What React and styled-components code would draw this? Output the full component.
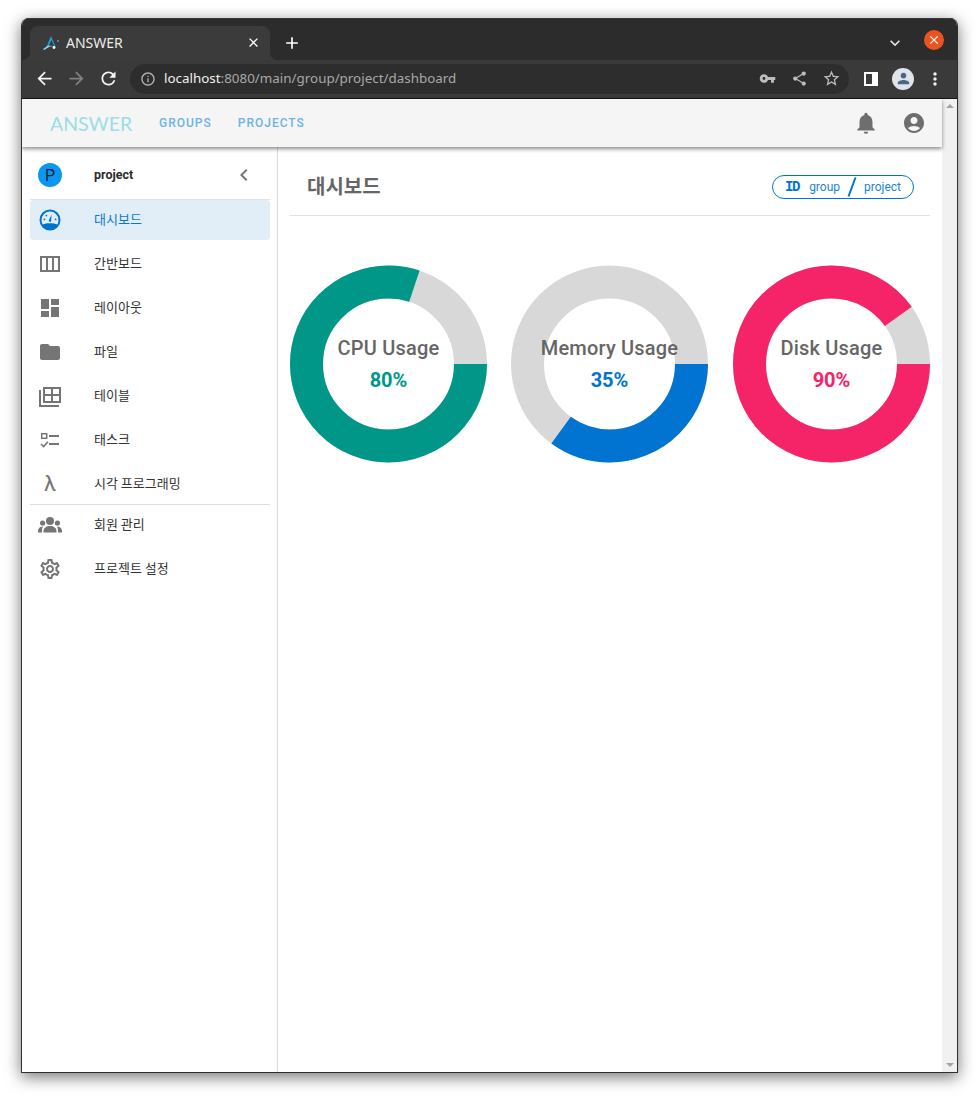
import React from 'react'
import styled, { createGlobalStyle } from 'styled-components'
import {
  MdAdd,
  MdAccountCircle,
  MdArrowBack,
  MdArrowForward,
  MdChevronLeft,
  MdClose,
  MdDashboard,
  MdExpandMore,
  MdFolder,
  MdInfoOutline,
  MdMoreVert,
  MdNotifications,
  MdOutlineSettings,
  MdPerson,
  MdRefresh,
  MdShare,
  MdStarBorder,
  MdVpnKey
} from 'react-icons/md'

const GlobalStyle = createGlobalStyle`
  html, body {
    margin: 0;
    padding: 0;
    background: #fff;
  }
  * {
    box-sizing: border-box;
  }
`

const Desktop = styled.div`
  width: 979px;
  height: 1097px;
  padding: 18px 21px 24px;
  overflow: hidden;
`

const Window = styled.div`
  width: 937px;
  height: 1055px;
  display: flex;
  flex-direction: column;
  border: 1px solid #2e2e2e;
  border-top: 0;
  border-radius: 8px 8px 0 0;
  box-shadow: 0 4px 16px rgba(0, 0, 0, 0.55);
  overflow: hidden;
  background: #fff;
`

const TabStrip = styled.div`
  height: 42px;
  flex: none;
  display: flex;
  align-items: flex-end;
  padding-left: 8px;
  color: #fff;
  background: #2c2c2c;
  border-top: 1px solid #3a3a3a;
`

const Tab = styled.div`
  position: relative;
  width: 240px;
  height: 34px;
  display: flex;
  align-items: center;
  padding: 0 9px 1px 12px;
  background: #3b3b3b;
  border-radius: 8px 8px 0 0;
  font: 14px 'Noto Sans', sans-serif;

  &::before,
  &::after {
    content: '';
    position: absolute;
    bottom: 0;
    width: 8px;
    height: 8px;
  }
  &::before {
    left: -8px;
    background: radial-gradient(circle at 0 0, transparent 8px, #3b3b3b 8.5px);
  }
  &::after {
    right: -8px;
    background: radial-gradient(circle at 100% 0, transparent 8px, #3b3b3b 8.5px);
  }
`

const TabTitle = styled.span`
  flex: 1;
  margin-left: 6px;
  color: #ececec;
`

const NewTab = styled.div`
  display: flex;
  height: 34px;
  align-items: center;
  margin-left: 12px;
  font-size: 20px;
`

const StripSpacer = styled.div`
  flex: 1;
`

const StripMenu = styled.div`
  display: flex;
  height: 34px;
  align-items: center;
  margin-right: 19px;
  font-size: 20px;
  color: #e4e4e4;
`

const WindowClose = styled.div`
  width: 20px;
  height: 20px;
  margin: 0 13px 10px 0;
  display: flex;
  align-items: center;
  justify-content: center;
  border-radius: 50%;
  color: #fff;
  background: #e95420;
  font-size: 14px;
`

const Toolbar = styled.div`
  height: 39px;
  flex: none;
  display: flex;
  align-items: center;
  padding: 0 0 1px 10px;
  background: #3a3a3a;
  border-bottom: 1px solid #141414;
`

const NavButton = styled.div`
  width: 24px;
  margin-right: 8px;
  display: flex;
  justify-content: center;
  font-size: 21px;
  color: ${p => (p.$disabled ? '#808080' : '#f4f4f4')};
`

const Omnibox = styled.div`
  width: 719px;
  height: 30px;
  flex: none;
  margin-left: 2px;
  display: flex;
  align-items: center;
  padding: 0 2px 0 10px;
  border-radius: 15px;
  background: #2d2d2d;
  font: 13.4px/1 'Noto Sans', sans-serif;
  color: #a8a8a8;
`

const UrlIcon = styled.span`
  display: flex;
  font-size: 16px;
  color: #b4b4b4;
`

const Url = styled.div`
  flex: 1;
  margin-left: 8px;
  white-space: nowrap;
`

const UrlHost = styled.span`
  color: #f0f0f0;
`

const OmniAction = styled.span`
  width: 32px;
  display: flex;
  justify-content: center;
  font-size: ${p => p.$size || 18}px;
  color: #bdbdbd;
`

const ToolActions = styled.div`
  display: flex;
  align-items: center;
  margin-left: 6px;
`

const ToolSlot = styled.div`
  width: 32px;
  display: flex;
  justify-content: center;
  color: #f0f0f0;
  font-size: 20px;
`

const SidePanelIcon = styled.span`
  width: 14px;
  height: 14px;
  border: 2px solid #fff;
  border-right-width: 6px;
`

const Avatar = styled.span`
  width: 22px;
  height: 22px;
  border-radius: 50%;
  display: flex;
  align-items: center;
  justify-content: center;
  background: #dfe3ea;
`

const Page = styled.div`
  flex: 1;
  min-height: 0;
  display: flex;
`

const PageBody = styled.div`
  flex: 1;
  min-width: 0;
  display: flex;
  flex-direction: column;
`

const AppBar = styled.header`
  position: relative;
  z-index: 2;
  height: 48px;
  flex: none;
  display: flex;
  align-items: center;
  padding: 0 16px 0 28px;
  background: #f5f5f5;
  box-shadow: 0 2px 4px rgba(0, 0, 0, 0.45);
`

const Logo = styled.div`
  width: 83px;
  font: 400 19.5px 'Lato', sans-serif;
  color: #9bdde8;
`

const AppLink = styled.a`
  margin-left: 26px;
  font: 500 12px 'Roboto', sans-serif;
  letter-spacing: 1px;
  color: #6db3e6;
`

const AppBarSpacer = styled.div`
  flex: 1;
`

const AppBarIcon = styled.span`
  display: flex;
  margin-left: ${p => p.$gap || 0}px;
  font-size: ${p => p.$size}px;
  color: #6e6e6e;
`

const Content = styled.div`
  flex: 1;
  min-height: 0;
  display: flex;
`

const Sidebar = styled.aside`
  width: 256px;
  flex: none;
  padding: 0 7px 0 8px;
  border-right: 1px solid #dcdcdc;
`

const ProjectRow = styled.div`
  height: 53px;
  display: flex;
  align-items: center;
  padding: 4px 14px 0 8px;
  border-bottom: 1px solid #dde3e8;
`

const ProjectBadge = styled.div`
  width: 24px;
  height: 24px;
  display: flex;
  align-items: center;
  justify-content: center;
  border-radius: 50%;
  background: #0a97f2;
  color: #12202c;
  font: 16px 'Roboto', sans-serif;
`

const ProjectName = styled.div`
  flex: 1;
  margin-left: 32px;
  padding-bottom: 1px;
  font: 700 12.5px 'Roboto', sans-serif;
  color: #2b2b2b;
`

const BackIcon = styled.span`
  display: flex;
  font-size: 24px;
  color: #757575;
`

const NavList = styled.nav`
  display: flex;
  flex-direction: column;
  gap: 4px;
`

const NavItem = styled.div`
  height: 40px;
  display: flex;
  align-items: center;
  padding-left: 8px;
  border-radius: 4px;
  font: 13px 'Noto Sans CJK KR', sans-serif;
  color: ${p => (p.$active ? '#0a78d0' : '#333')};
  background: ${p => (p.$active ? '#e1eef7' : 'transparent')};
`

const NavIcon = styled.span`
  width: 24px;
  height: 24px;
  display: flex;
  align-items: center;
  justify-content: center;
  margin-right: 32px;
  font-size: 24px;
  color: ${p => (p.$active ? '#0073cf' : '#757575')};
`

const NavLabel = styled.span`
  padding-bottom: 4px;
`

const LambdaGlyph = styled.span`
  font: 400 22px/24px 'Roboto', sans-serif;
`

const NavDivider = styled.div`
  height: 1px;
  background: #dedede;
`

const Main = styled.main`
  flex: 1;
  min-width: 0;
  padding: 0 12px;
`

const MainHeader = styled.div`
  height: 69px;
  display: flex;
  align-items: center;
  justify-content: space-between;
  padding: 13px 16px 1px 17px;
  border-bottom: 1px solid #e0e0e0;
`

const Title = styled.h1`
  margin: 0 0 4px;
  font: 700 20px 'Noto Sans CJK KR', sans-serif;
  color: #666;
`

const IdBadge = styled.div`
  width: 142px;
  height: 24px;
  display: flex;
  align-items: center;
  padding: 0 12px;
  border: 1px solid #0073cf;
  border-radius: 12px;
  font: 12px 'Roboto', sans-serif;
  color: #1d84d8;
`

const IdMark = styled.span`
  width: 26px;
  font: 700 14px 'Liberation Mono', monospace;
  letter-spacing: -1.5px;
  color: #0073cf;
`

const IdSlash = styled.svg`
  width: 10px;
  height: 20px;
  margin: 0 7px;
  flex: none;
`

const Charts = styled.div`
  display: grid;
  grid-template-columns: 221px 222px 197px;
  margin-top: 49px;
`

const Donut = styled.div`
  position: relative;
  width: 197px;
  height: 198px;
`

const DonutSvg = styled.svg`
  display: block;
  width: 197px;
  height: 198px;
`

const DonutLabel = styled.div`
  position: absolute;
  left: 0;
  right: 0;
  top: 69px;
  text-align: center;
  font: 500 20px/28px 'Roboto', sans-serif;
  letter-spacing: 0.2px;
  color: #666;
`

const DonutValue = styled.div`
  margin-top: 4px;
  font-weight: 700;
  letter-spacing: 0;
  color: ${p => p.$color};
`

const Scrollbar = styled.div`
  width: 15px;
  flex: none;
  display: flex;
  flex-direction: column;
  justify-content: space-between;
  align-items: center;
  padding: 5px 0;
  background: #f1f1f1;
`

const ScrollArrow = styled.span`
  width: 0;
  height: 0;
  border-left: 4px solid transparent;
  border-right: 4px solid transparent;
  border-${p => (p.$down ? 'top' : 'bottom')}: 4px solid #a3a3a3;
`

const TabLogo = () => (
  <svg width="18" height="16" viewBox="0 0 18 16">
    <path d="M9 1 L4 13 L6.5 11 L9.5 5 L12.5 12 L14 13 Z" fill="#1e9fe0" />
    <path d="M1 14 L6 10.5 L12 11 L8 11.6 L2 15 Z" fill="#8bd4f2" />
    <circle cx="12" cy="12.5" r="1.4" fill="#fff" />
    <circle cx="16" cy="6" r="0.8" fill="#8bd4f2" />
  </svg>
)

const GaugeIcon = () => (
  <svg width="22" height="22" viewBox="0 0 22 22" fill="#0073cf">
    <path d="M11 0.5 A10.5 10.5 0 1 0 11 21.5 A10.5 10.5 0 1 0 11 0.5 Z M11 2.6 A8.4 8.4 0 0 1 19.4 11 A8.4 8.4 0 0 1 18.4 15.6 C16.5 14.7 13.9 14.2 11 14.2 C8.1 14.2 5.5 14.7 3.6 15.6 A8.4 8.4 0 0 1 2.6 11 A8.4 8.4 0 0 1 11 2.6 Z" fillRule="evenodd" />
    <path d="M10 11 L12.6 5.6 L12.2 11.6 A1.2 1.2 0 1 1 10 11 Z" />
    <circle cx="5.4" cy="10.4" r="0.9" />
    <circle cx="7.4" cy="6.6" r="0.9" />
    <circle cx="16.6" cy="10.4" r="0.9" />
  </svg>
)

const KanbanIcon = () => (
  <svg width="24" height="24" viewBox="0 0 24 24" fill="none" stroke="currentColor" strokeWidth="2">
    <rect x="3" y="5" width="18" height="14" />
    <path d="M9 5 V19 M15 5 V19" />
  </svg>
)

const TableIcon = () => (
  <svg width="24" height="24" viewBox="0 0 24 24" fill="none" stroke="currentColor" strokeWidth="2">
    <path d="M6 4 H22 V18 H6 Z M14 4 V18 M6 11 H22" />
    <path d="M2 6 V22 H21" />
  </svg>
)

const TaskIcon = () => (
  <svg width="24" height="24" viewBox="0 0 24 24" fill="none" stroke="currentColor">
    <rect x="3.7" y="5.7" width="5" height="4.6" strokeWidth="1.5" />
    <path d="M3 16 L5.6 18.6 L10 13.8" strokeWidth="1.6" />
    <path d="M11 8 H21 M11 16 H21" strokeWidth="2" />
  </svg>
)

const MembersIcon = () => (
  <svg width="24" height="24" viewBox="0 0 24 24" fill="currentColor">
    <circle cx="12" cy="8" r="4" />
    <circle cx="4.6" cy="10" r="2.6" />
    <circle cx="19.4" cy="10" r="2.6" />
    <path d="M5.5 19.5 V18 C5.5 15 8.5 13 12 13 C15.5 13 18.5 15 18.5 18 V19.5 Z" />
    <path d="M0 19.5 V18 C0 15.6 2 13.6 5 13.6 C4.4 14.8 4 16 4 17.5 V19.5 Z" />
    <path d="M24 19.5 V18 C24 15.6 22 13.6 19 13.6 C19.6 14.8 20 16 20 17.5 V19.5 Z" />
  </svg>
)

const navTop = [
  { label: '대시보드', icon: <GaugeIcon />, active: true },
  { label: '간반보드', icon: <KanbanIcon /> },
  { label: '레이아웃', icon: <MdDashboard /> },
  { label: '파일', icon: <MdFolder /> },
  { label: '테이블', icon: <TableIcon /> },
  { label: '태스크', icon: <TaskIcon /> },
  { label: '시각 프로그래밍', icon: <LambdaGlyph>λ</LambdaGlyph> }
]

const navBottom = [
  { label: '회원 관리', icon: <MembersIcon /> },
  { label: '프로젝트 설정', icon: <MdOutlineSettings /> }
]

const charts = [
  { label: 'CPU Usage', value: 80, color: '#009788' },
  { label: 'Memory Usage', value: 35, color: '#0074d0' },
  { label: 'Disk Usage', value: 90, color: '#f52468' }
]

const RADIUS = 82
const CIRCUMFERENCE = 2 * Math.PI * RADIUS

const renderNav = items =>
  items.map(item => (
    <NavItem key={item.label} $active={item.active}>
      <NavIcon $active={item.active}>{item.icon}</NavIcon>
      <NavLabel>{item.label}</NavLabel>
    </NavItem>
  ))

const App = () => (
  <Desktop>
    <GlobalStyle />
    <Window>
      <TabStrip>
        <Tab>
          <TabLogo />
          <TabTitle>ANSWER</TabTitle>
          <MdClose size={15} />
        </Tab>
        <NewTab>
          <MdAdd />
        </NewTab>
        <StripSpacer />
        <StripMenu>
          <MdExpandMore />
        </StripMenu>
        <WindowClose>
          <MdClose />
        </WindowClose>
      </TabStrip>
      <Toolbar>
        <NavButton><MdArrowBack /></NavButton>
        <NavButton $disabled><MdArrowForward /></NavButton>
        <NavButton><MdRefresh /></NavButton>
        <Omnibox>
          <UrlIcon><MdInfoOutline /></UrlIcon>
          <Url><UrlHost>localhost</UrlHost>:8080/main/group/project/dashboard</Url>
          <OmniAction $size={17}><MdVpnKey /></OmniAction>
          <OmniAction $size={17}><MdShare /></OmniAction>
          <OmniAction $size={19}><MdStarBorder /></OmniAction>
        </Omnibox>
        <ToolActions>
          <ToolSlot><SidePanelIcon /></ToolSlot>
          <ToolSlot>
            <Avatar><MdPerson color="#4a6585" size={17} /></Avatar>
          </ToolSlot>
          <ToolSlot><MdMoreVert /></ToolSlot>
        </ToolActions>
      </Toolbar>
      <Page>
        <PageBody>
          <AppBar>
            <Logo>ANSWER</Logo>
            <AppLink>GROUPS</AppLink>
            <AppLink>PROJECTS</AppLink>
            <AppBarSpacer />
            <AppBarIcon $size={26}><MdNotifications /></AppBarIcon>
            <AppBarIcon $size={24} $gap={23}><MdAccountCircle /></AppBarIcon>
          </AppBar>
          <Content>
            <Sidebar>
              <ProjectRow>
                <ProjectBadge>P</ProjectBadge>
                <ProjectName>project</ProjectName>
                <BackIcon><MdChevronLeft /></BackIcon>
              </ProjectRow>
              <NavList>{renderNav(navTop)}</NavList>
              <NavDivider />
              <NavList>{renderNav(navBottom)}</NavList>
            </Sidebar>
            <Main>
              <MainHeader>
                <Title>대시보드</Title>
                <IdBadge>
                  <IdMark>ID</IdMark>
                  group
                  <IdSlash viewBox="0 0 10 20">
                    <path d="M1.5 19.5 L8.5 0.5" stroke="#0073cf" strokeWidth="2" />
                  </IdSlash>
                  project
                </IdBadge>
              </MainHeader>
              <Charts>
                {charts.map(chart => (
                  <Donut key={chart.label}>
                    <DonutSvg viewBox="0 0 197 198">
                      <circle cx="98.5" cy="99" r={RADIUS} fill="none" stroke="#d8d8d8" strokeWidth="33" />
                      <circle
                        cx="98.5"
                        cy="99"
                        r={RADIUS}
                        fill="none"
                        stroke={chart.color}
                        strokeWidth="33"
                        strokeDasharray={`${(CIRCUMFERENCE * chart.value) / 100} ${CIRCUMFERENCE}`}
                      />
                    </DonutSvg>
                    <DonutLabel>
                      {chart.label}
                      <DonutValue $color={chart.color}>{chart.value}%</DonutValue>
                    </DonutLabel>
                  </Donut>
                ))}
              </Charts>
            </Main>
          </Content>
        </PageBody>
        <Scrollbar>
          <ScrollArrow />
          <ScrollArrow $down />
        </Scrollbar>
      </Page>
    </Window>
  </Desktop>
)

export default App
